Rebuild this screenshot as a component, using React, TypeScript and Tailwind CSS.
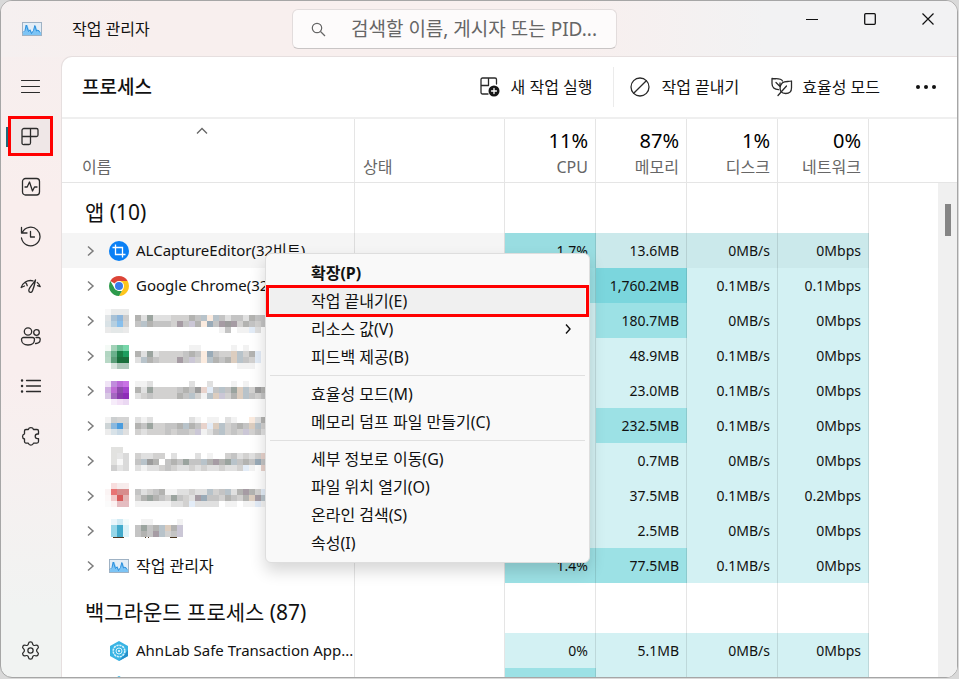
import { Settings } from "lucide-react";
import type { ReactNode } from "react";

type Heat = "low" | "mid" | "high";

const heatClass: Record<Heat, string> = {
  low: "bg-[#d3f1f3]",
  mid: "bg-[#9ce1e5]",
  high: "bg-[#7bd6dd]",
};

const hoverHeatClass: Record<Heat, string> = {
  low: "bg-[#cbe9eb]",
  mid: "bg-[#99dde1]",
  high: "bg-[#76ced5]",
};

/* ---------- pixelated names ---------- */

const shades: Record<string, string> = {
  a: "#f2f2f2",
  b: "#e0e0e0",
  c: "#d2d1d0",
  d: "#c4c4c4",
  e: "#b3b3b1",
  f: "#9c9c9c",
  h: "#fbebdf",
  i: "#9aabb8",
  j: "#e3ecf7",
  k: "#b8c3ca",
  l: "#a69ca4",
  m: "#dccdbf",
  n: "#9ba49f",
  p: "#cbc7d6",
  r: "#e8d3cc",
};

type Mosaic = { top: number; icon: string[][]; text: string[] };

const mosaics: Record<string, Mosaic> = {
  edge: {
    top: 5,
    icon: [
      ["#f8f8f8", "#e9eaea", "#e9eaea", "#e9eaea"],
      ["#e0e4e6", "#a9c2d6", "#8db6dc", "#cccccc"],
      ["#d9e2e6", "#b5cfe0", "#88bfec", "#d2d2d2"],
      ["#eaeaea", "#e4e8e8", "#e4e8e8", "#eaeaea"],
    ],
    text: ["", "ebnbbbcccedkhkdbddbedd", "dkedddcldpehidlflcedcd", "..............ad.aajb."],
  },
  excel: {
    top: 6,
    icon: [
      ["#f4faf6", "#a3d2b8", "#6cc096", "#78d6aa"],
      ["#b2d6c2", "#6ab08c", "#1a7e46", "#1e9e60"],
      ["#b8d8c6", "#5c9e7a", "#1a6e3c", "#1a6e3c"],
      ["", "#d8e4de", "#b0c8bc", "#b0c8bc"],
    ],
    text: [".........aa.....a.a...", "ebnbccccdedhidccmkcej.", "bkedcccldpchkedemkdcj.", ".................aaa.."],
  },
  onenote: {
    top: 7,
    icon: [
      ["#f0e4f6", "#c08cdc", "#ba68d8", "#c872e4"],
      ["#d0b0e2", "#be6cd4", "#8e4cac", "#a442cc"],
      ["#d8c8e4", "#a468c0", "#8a3cac", "#8e2cb8"],
      ["", "#f6ecfa", "#f2e0f6", "#ead8f2"],
    ],
    text: ["aab......b..b...a.a...", "ebnccccdedfrjdkdnmkcfe", "bcdccccedkcakmpcemkdcd"],
  },
  word: {
    top: 8,
    icon: [
      ["#f2f2f2", "#cccfd0", "#d4d4d4", "#d4d4d4"],
      ["#cdd4d6", "#8ab8de", "#4a9cde", "#cccccc"],
      ["#ececec", "#d8e2e8", "#c8d8e4", "#e0e0e0"],
    ],
    text: ["bab......ba.aa.ba..hbe", "ednccddekedrjmkcdedmkc", "cbcccdcddcpabdkcdcpcdb"],
  },
  hwp: {
    top: 3,
    icon: [
      ["", "#e2e2e0", "#e2e2e0", ""],
      ["", "#e2e2e0", "#e6e6e6", "#dadada"],
      ["", "#e2e2e0", "#f8f8f8", "#dadada"],
      ["", "#cfcfcf", "#e4e4e4", "#dadada"],
    ],
    text: ["", "cbbcc.b...b.a..cdbcbcr", "dkfe.dednddkelenkdedid", "babbcdcbbcbcbbcbbcja.r"],
  },
  pdf: {
    top: 4,
    icon: [
      ["", "#f8dede", "#f6ecec", "#f8ecec"],
      ["#fbf4f4", "#e87474", "#d68c8c", "#d88c8c"],
      ["#fcf8f8", "#f2caca", "#d85a5a", "#e4b4b4"],
      ["#fbfbfb", "#fbf2f2", "#e4bcc0", "#e4bcc0"],
    ],
    text: ["", "dbcdeaabbcbbkcdkbelecj", "cenedcndcbliddcedcemlk", "aaaaaabbcjbbbb.aa.aaja"],
  },
  memo: {
    top: 5,
    icon: [
      ["", "#eaf6fb", "#cfeaf4", "#f4fbfb"],
      ["", "#96d6e8", "#42aacb", "#dcf2f8"],
      ["", "#96d6e8", "#42aacb", "#dcf2f8"],
    ],
    text: [".aa....a", "dndekmep", "dedlkcdp"],
  },
};

function PixelName({ mosaic }: { mosaic: Mosaic }) {
  return (
    <svg width="165" height="34" className="ml-[9px] shrink-0" shapeRendering="crispEdges" aria-hidden="true">
      {mosaic.icon.map((line, y) =>
        line.map((fill, x) =>
          fill ? <rect key={`i${x}-${y}`} x={x * 6} y={mosaic.top + y * 6} width="6" height="6" fill={fill} /> : null,
        ),
      )}
      {mosaic.text.map((line, y) =>
        line.split("").map((ch, x) =>
          shades[ch] ? (
            <rect key={`t${x}-${y}`} x={30 + x * 6} y={mosaic.top + y * 6} width="6" height="6" fill={shades[ch]} />
          ) : null,
        ),
      )}
      {/* bits of the last row that stick out under the blocks */}
      {mosaic === mosaics.memo && (
        <path d="M8 23.500h11M40 23.500h1M43 23.500h1M65 23.500h7" stroke="#4a3520" fill="none" />
      )}
    </svg>
  );
}

/* ---------- app icons ---------- */

function TaskManagerIcon() {
  return (
    <svg width="20" height="14" viewBox="0 0 20 14" className="shrink-0" aria-hidden="true">
      <rect x=".5" y=".5" width="19" height="13" fill="#e3edf6" stroke="#9fb2c4" />
      <path d="M1 11l2-2 1-6 1.500 0 1.500 5 1.500-1 1.500 4 1.500-2 1-5 1.500 0 1 5 2-1 2 3v2H1z" fill="#7cc4f5" />
      <path d="M1 10.500l2-2 1.200-5.500 2.300 6.500 1.500-1.500 1.500 3.500 2-3 1.300-5 1.700 5.500 1.500-1 2 2.500" fill="none" stroke="#2b8fdc" />
    </svg>
  );
}

function CaptureIcon() {
  return (
    <svg width="20" height="20" viewBox="0 0 20 20" className="shrink-0" aria-hidden="true">
      <circle cx="10" cy="10" r="10" fill="#0a80f5" />
      <path d="M6.500 3.500v10h10M3.500 6.500h10v10" fill="none" stroke="#fff" strokeWidth="1.300" />
    </svg>
  );
}

function ChromeIcon() {
  return (
    <svg width="20" height="20" viewBox="0 0 20 20" className="shrink-0" aria-hidden="true">
      <path d="M10 10L1.340 5A10 10 0 0 1 18.660 5z" fill="#dc4437" />
      <path d="M10 5h8.660A10 10 0 0 1 10 20l4.330-7.500z" fill="#fdc51d" />
      <path d="M1.340 5l4.330 7.500L10 15h2.900L10 20A10 10 0 0 1 1.340 5z" fill="#2d9a4b" />
      <circle cx="10" cy="10" r="5" fill="#fff" />
      <circle cx="10" cy="10" r="4" fill="#3a7bea" />
    </svg>
  );
}

function AhnLabIcon() {
  return (
    <svg width="20" height="20" viewBox="0 0 20 20" className="shrink-0" aria-hidden="true">
      <path d="M10 0l9 5v10l-9 5-9-5V5z" fill="#39b4e4" />
      <path d="M10 20l9-5V9l-9 11z" fill="#228fca" />
      <circle cx="10" cy="10" r="5.800" fill="none" stroke="#d6f1fb" strokeWidth="1.600" strokeDasharray="2.200 .8" />
      <circle cx="10" cy="10" r="3" fill="none" stroke="#d6f1fb" strokeWidth="1" />
      <circle cx="10" cy="10" r="1" fill="#fff" />
    </svg>
  );
}

/* ---------- line icons ---------- */

function LineIcon({ size = 20, children }: { size?: number; children: ReactNode }) {
  return (
    <svg
      width={size}
      height={size}
      viewBox={`0 0 ${size} ${size}`}
      fill="none"
      stroke="#2b2b2b"
      strokeWidth="1.300"
      strokeLinecap="round"
      strokeLinejoin="round"
      aria-hidden="true"
    >
      {children}
    </svg>
  );
}

const navItems = [
  {
    label: "탐색 열기",
    icon: <path d="M1.500 4.500h18M1.500 10.500h18M1.500 16.500h18" strokeWidth="1.200" />,
  },
  {
    label: "프로세스",
    icon: (
      <path d="M4 2.500h12.500a1.500 1.500 0 0 1 1.500 1.500v5a1.500 1.500 0 0 1-1.500 1.500H2M10.500 2.500v14.500a1.500 1.500 0 0 1-1.500 1.500H4A1.500 1.500 0 0 1 2 17V4.500A2 2 0 0 1 4 2.500z" />
    ),
    selected: true,
  },
  {
    label: "성능",
    icon: (
      <>
        <rect x="2.500" y="2.500" width="17" height="16.500" rx="3" />
        <path d="M5 11h2.200l2.300-5 3 9 2-4H17" />
      </>
    ),
  },
  {
    label: "앱 기록",
    icon: (
      <>
        <path d="M1.500 1.500v5.500H7M2.300 6.500A9.300 9.300 0 1 1 1.500 12" />
        <path d="M10.500 5.500v5.500h4" />
      </>
    ),
  },
  {
    label: "시작 앱",
    icon: (
      <>
        <path d="M1.200 11.500C2.500 7 7 3.500 13 4.800M5.500 6.500c1 .8 1.500 2 1.700 3.200M1.200 11.500l3.300-1.500M17.300 6.500c1.400 1 2.300 2.400 2.900 4.200l-2.700-1" />
        <path d="M15.500 4c-2 3.800-6.700 7.500-6.700 10.600 0 2.200 2.700 2.600 3.600.4C13.600 12.200 14.700 8 15.500 4z" />
      </>
    ),
  },
  {
    label: "사용자",
    icon: (
      <>
        <circle cx="8" cy="5.500" r="3.700" />
        <circle cx="16.500" cy="6.500" r="2.800" />
        <path d="M3.500 11.500h9a2 2 0 0 1 2 2c0 3.500-2.700 5.500-6.500 5.500s-6.500-2-6.500-5.500a2 2 0 0 1 2-2zM16 11.500h2.200a2 2 0 0 1 2 2c0 2.700-2 4.200-4.700 4" />
      </>
    ),
  },
  {
    label: "세부 정보",
    icon: (
      <>
        <path d="M6.500 4.500h14M6.500 10h14M6.500 15.500h14" />
        <path d="M2 4.500h.1M2 10h.1M2 15.500h.1" strokeWidth="2.400" />
      </>
    ),
  },
  {
    label: "서비스",
    icon: (
      <path d="M6 3.500h2.300a2.700 2.700 0 0 1 5.200 0H17a1.500 1.500 0 0 1 1.500 1.500v3h-1a2.300 2.300 0 0 0 0 4.600h1v3a1.500 1.500 0 0 1-1.500 1.500h-3.500a2.700 2.700 0 0 1-5.200 0H6a1.500 1.500 0 0 1-1.500-1.500V13a2.700 2.700 0 0 1 0-5.200V5A1.500 1.500 0 0 1 6 3.500z" />
    ),
  },
];

function RunTaskIcon() {
  return (
    <LineIcon size={20}>
      <path d="M8 17H2.500A1.500 1.500 0 0 1 1 15.500v-13A1.500 1.500 0 0 1 2.500 1H15a1.500 1.500 0 0 1 1.500 1.500V7M8.500 1v7.500M1 8.500h7.500" />
      <circle cx="14" cy="14" r="5.500" fill="#151515" stroke="none" />
      <path d="M14 11.500v5M11.500 14h5" stroke="#fff" />
    </LineIcon>
  );
}

function EndTaskIcon() {
  return (
    <LineIcon size={20}>
      <circle cx="10" cy="10" r="9" />
      <path d="M3.700 16.300L16.300 3.700" />
    </LineIcon>
  );
}

function EfficiencyIcon() {
  return (
    <LineIcon size={22}>
      <path d="M1 2.500c3.500.8 8.500-1 10.500 2.500M1 2.500v5c0 4 2.500 6.200 6.500 6.200M5 6.500l4 4M9 10.500V7" />
      <path d="M20.500 5v7c0 3.500-2.300 5.500-5.800 5.500-2.200 0-3.800-.8-5-2.200-1.200-3.300-.5-6.500 1.800-8.600C14 4.800 17.500 6 20.500 5zM15.500 10L7 19.500" />
    </LineIcon>
  );
}

function Chevron() {
  return (
    <svg width="10" height="12" viewBox="0 0 10 12" fill="none" stroke="#7c7c7c" strokeWidth="1.500" aria-hidden="true">
      <path d="M2 1.500L7 6 2 10.500" />
    </svg>
  );
}

/* ---------- process table ---------- */

type Row = {
  name: string;
  korean?: boolean;
  icon?: ReactNode;
  mosaic?: Mosaic;
  hovered?: boolean;
  single?: boolean;
  values: [string, string, string, string];
  heat: [Heat, Heat, Heat, Heat];
};

const apps: Row[] = [
  {
    name: "ALCaptureEditor(32비트)",
    icon: <CaptureIcon />,
    hovered: true,
    values: ["1.7%", "13.6MB", "0MB/s", "0Mbps"],
    heat: ["mid", "low", "low", "low"],
  },
  {
    name: "Google Chrome(32비트)",
    icon: <ChromeIcon />,
    values: ["1.2%", "1,760.2MB", "0.1MB/s", "0.1Mbps"],
    heat: ["mid", "high", "low", "low"],
  },
  { name: "", mosaic: mosaics.edge, values: ["0%", "180.7MB", "0MB/s", "0Mbps"], heat: ["low", "mid", "low", "low"] },
  { name: "", mosaic: mosaics.excel, values: ["0%", "48.9MB", "0.1MB/s", "0Mbps"], heat: ["low", "low", "low", "low"] },
  { name: "", mosaic: mosaics.onenote, values: ["0%", "23.0MB", "0.1MB/s", "0Mbps"], heat: ["low", "low", "low", "low"] },
  { name: "", mosaic: mosaics.word, values: ["0%", "232.5MB", "0.1MB/s", "0Mbps"], heat: ["low", "mid", "low", "low"] },
  { name: "", mosaic: mosaics.hwp, values: ["0%", "0.7MB", "0MB/s", "0Mbps"], heat: ["low", "low", "low", "low"] },
  { name: "", mosaic: mosaics.pdf, values: ["0%", "37.5MB", "0.1MB/s", "0.2Mbps"], heat: ["low", "low", "low", "low"] },
  { name: "", mosaic: mosaics.memo, values: ["0%", "2.5MB", "0MB/s", "0Mbps"], heat: ["low", "low", "low", "low"] },
  {
    name: "작업 관리자",
    korean: true,
    icon: <TaskManagerIcon />,
    values: ["1.4%", "77.5MB", "0.1MB/s", "0Mbps"],
    heat: ["mid", "mid", "low", "low"],
  },
];

const background: Row[] = [
  {
    name: "AhnLab Safe Transaction App...",
    icon: <AhnLabIcon />,
    single: true,
    values: ["0%", "5.1MB", "0MB/s", "0Mbps"],
    heat: ["low", "low", "low", "low"],
  },
  { name: "", icon: <AhnLabIcon />, single: true, values: ["", "", "", ""], heat: ["mid", "low", "low", "low"] },
];

const metrics = [
  { label: "CPU", pct: "11%" },
  { label: "메모리", pct: "87%" },
  { label: "디스크", pct: "1%" },
  { label: "네트워크", pct: "0%" },
];

function GroupRow({ title }: { title: string }) {
  return (
    <tr className="h-[50px]">
      <th scope="rowgroup" className="border-r border-black/10 pt-2 pl-[23px] text-left text-[21px] leading-7 font-normal whitespace-nowrap">
        {title}
      </th>
      {[0, 1, 2, 3, 4].map((i) => (
        <td key={i} className="border-r border-black/10" />
      ))}
      <td />
    </tr>
  );
}

function ProcessRow({ row }: { row: Row }) {
  const plain = row.hovered ? "bg-[#f5f5f5]" : "";
  return (
    <tr className="h-[35px]">
      <td className={`border-r border-black/10 p-0 ${plain}`}>
        <div className="flex h-[34px] items-center overflow-hidden pl-6">
          {row.single ? (
            <span className="w-[10px] shrink-0" />
          ) : (
            <button type="button" aria-label="펼치기" className="w-[10px] shrink-0">
              <Chevron />
            </button>
          )}
          {row.mosaic ? (
            <PixelName mosaic={row.mosaic} />
          ) : (
            <div className="ml-[13px] flex items-center gap-[7px]">
              {row.icon}
              <span className={row.korean ? "text-base whitespace-nowrap" : "text-[15px] whitespace-nowrap"}>{row.name}</span>
            </div>
          )}
        </div>
      </td>
      <td className={`border-r border-black/10 ${plain}`} />
      {row.values.map((v, i) => (
        <td
          key={i}
          className={`border-r border-black/10 p-0 pr-[7px] text-right text-sm ${
            row.hovered ? hoverHeatClass[row.heat[i]] : heatClass[row.heat[i]]
          }`}
        >
          {v}
        </td>
      ))}
      <td />
    </tr>
  );
}

function ProcessTable() {
  return (
    <table className="w-full table-fixed border-separate border-spacing-0">
      <colgroup>
        <col className="w-[293px]" />
        <col className="w-[150px]" />
        <col className="w-[91px]" />
        <col className="w-[91px]" />
        <col className="w-[91px]" />
        <col className="w-[91px]" />
        <col />
      </colgroup>
      <thead>
        <tr className="h-16 text-[#666]">
          <th scope="col" className="border-r border-b border-black/10 p-0 pl-5 text-left align-top font-normal">
            <div className="flex h-6 items-center justify-center pr-8">
              <svg width="12" height="8" viewBox="0 0 12 8" fill="none" stroke="#666" strokeWidth="1.300" aria-hidden="true">
                <path d="M1 6.500L6 1.500l5 5" />
              </svg>
            </div>
            <div className="pt-3 text-base leading-6">이름</div>
          </th>
          <th scope="col" className="border-r border-b border-black/10 p-0 pt-9 pl-2 text-left align-top text-base leading-6 font-normal">
            상태
          </th>
          {metrics.map((m) => (
            <th key={m.label} scope="col" className="border-r border-b border-black/10 p-0 pt-2 pr-[7px] text-right align-top font-normal">
              <div className="text-xl leading-7 text-black">{m.pct}</div>
              <div className="text-base leading-6">{m.label}</div>
            </th>
          ))}
          <td className="border-b border-black/10" />
        </tr>
      </thead>
      <tbody>
        <GroupRow title="앱 (10)" />
        {apps.map((row, i) => (
          <ProcessRow key={i} row={row} />
        ))}
        <GroupRow title="백그라운드 프로세스 (87)" />
        {background.map((row, i) => (
          <ProcessRow key={i} row={row} />
        ))}
      </tbody>
    </table>
  );
}

function ScrollBar() {
  return (
    <div className="flex w-[19px] shrink-0 flex-col">
      <div className="h-16 border-b border-black/10" />
      <div className="flex-1 bg-[#f0f0f0] pt-[21px] pl-[7px]">
        <div className="h-8 w-[6px] bg-[#858585]" />
      </div>
    </div>
  );
}

/* ---------- context menu ---------- */

const menuGroups = [
  [
    { label: "확장(P)", strong: true },
    { label: "작업 끝내기(E)", marked: true },
    { label: "리소스 값(V)", submenu: true },
    { label: "피드백 제공(B)" },
  ],
  [{ label: "효율성 모드(M)" }, { label: "메모리 덤프 파일 만들기(C)" }],
  [{ label: "세부 정보로 이동(G)" }, { label: "파일 위치 열기(O)" }, { label: "온라인 검색(S)" }, { label: "속성(I)" }],
] as { label: string; strong?: boolean; marked?: boolean; submenu?: boolean }[][];

function ContextMenu() {
  return (
    <div
      role="menu"
      className="absolute top-[196px] left-[203px] w-[325px] rounded-md border border-[#dedede] bg-[#f9f9f9] px-1 py-[5px] shadow-[0_8px_16px_rgba(0,0,0,0.16)]"
    >
      {menuGroups.map((group, g) => (
        <div key={g} className={g > 0 ? "mt-1 border-t border-[#e0e0e0] pt-1" : ""}>
          {group.map((item) => (
            <button
              key={item.label}
              type="button"
              role="menuitem"
              className={`relative flex h-7 w-full items-center justify-between pr-3 pl-[41px] text-left text-base ${
                item.strong ? "font-bold" : ""
              } ${item.marked ? "bg-[#f0f0f0]" : ""}`}
            >
              {item.label}
              {item.submenu && (
                <svg width="10" height="12" viewBox="0 0 10 12" fill="none" stroke="#111" strokeWidth="1.400" aria-hidden="true">
                  <path d="M3 1.500L7 6l-4 4.500" />
                </svg>
              )}
              {item.marked && <span className="absolute -inset-x-1 -inset-y-0.5 border-[3px] border-[#ff0000]" />}
            </button>
          ))}
        </div>
      ))}
    </div>
  );
}

/* ---------- window ---------- */

function TitleBar() {
  return (
    <header className="flex h-14 shrink-0 items-start pl-[21px]">
      <div className="flex h-14 w-[270px] items-center gap-[30px]">
        <TaskManagerIcon />
        <span className="text-base">작업 관리자</span>
      </div>
      <label className="mt-2 flex h-10 w-[325px] items-center rounded-md border border-[#e2dcdc] border-b-[#c9c5c5] bg-[#fdfbfb] pl-[18px]">
        <svg width="15" height="15" viewBox="0 0 15 15" fill="none" stroke="#666" strokeWidth="1.200" aria-hidden="true">
          <circle cx="6" cy="6" r="4.700" />
          <path d="M9.500 9.500l4.500 4.500" />
        </svg>
        <input
          type="text"
          aria-label="검색"
          placeholder="검색할 이름, 게시자 또는 PID..."
          className="ml-[25px] min-w-0 flex-1 bg-transparent text-[19px] outline-none placeholder:text-[#666]"
        />
      </label>
      <div className="ml-auto flex">
        <button type="button" aria-label="최소화" className="flex h-9 w-[58px] items-center justify-center">
          <svg width="12" height="12" stroke="#111" shapeRendering="crispEdges">
            <path d="M0 6.500h12" />
          </svg>
        </button>
        <button type="button" aria-label="최대화" className="flex h-9 w-[58px] items-center justify-center">
          <svg width="12" height="12" fill="none" stroke="#111" strokeWidth="1.300">
            <rect x=".7" y=".7" width="10.600" height="10.600" rx="1" />
          </svg>
        </button>
        <button type="button" aria-label="닫기" className="flex h-9 w-[58px] items-center justify-center">
          <svg width="12" height="12" stroke="#111" strokeWidth="1.200">
            <path d="M.5.5l11 11M11.500.5l-11 11" />
          </svg>
        </button>
      </div>
    </header>
  );
}

function SideNav() {
  return (
    <nav className="flex w-[61px] shrink-0 flex-col pt-1 pb-[7px] pl-[7px]">
      {navItems.map((item) => (
        <div key={item.label} className="flex h-[50px] items-center">
          <button
            type="button"
            aria-label={item.label}
            className={`relative flex h-10 w-[45px] items-center justify-center ${
              item.selected ? "border-[3px] border-[#ff0000] bg-[#efe7e7]" : ""
            }`}
          >
            {item.selected && <span className="absolute top-2 -left-[5px] h-5 w-0.5 bg-[#1d6b7c]" />}
            <LineIcon size={21}>{item.icon}</LineIcon>
          </button>
        </div>
      ))}
      <button type="button" aria-label="설정" className="mt-auto flex h-10 w-[45px] items-center justify-center">
        <Settings size={21} strokeWidth={1.4} color="#2b2b2b" />
      </button>
    </nav>
  );
}

function Toolbar() {
  return (
    <div className="flex h-[62px] shrink-0 items-center border-b-2 border-[#efefef] px-5">
      <h1 className="text-[19px] font-medium">프로세스</h1>
      <div className="ml-auto flex items-center">
        <button type="button" className="flex items-center gap-[11px] text-base">
          <RunTaskIcon />새 작업 실행
        </button>
        <span className="mr-4 ml-[21px] h-10 w-px bg-[#ebebeb]" />
        <button type="button" className="flex items-center gap-[11px] text-base">
          <EndTaskIcon />
          작업 끝내기
        </button>
        <button type="button" className="ml-8 flex items-center gap-[9px] text-base">
          <EfficiencyIcon />
          효율성 모드
        </button>
        <button type="button" aria-label="더 보기" className="ml-[35px]">
          <svg width="22" height="6" fill="#111">
            <circle cx="3" cy="3" r="2" />
            <circle cx="11" cy="3" r="2" />
            <circle cx="19" cy="3" r="2" />
          </svg>
        </button>
      </div>
    </div>
  );
}

export default function App() {
  return (
    <div className="h-screen bg-[#d9d9d9] pr-px pb-px font-['Noto_Sans','Noto_Sans_CJK_KR',sans-serif] text-[#111]">
      <div className="flex h-full flex-col overflow-hidden rounded-xl border border-[#a6a6a6] bg-[linear-gradient(180deg,#f6efef_0%,#f9eeed_30%,#f9eeee_55%,#f1f3f2_90%)]">
        <div className="bg-[linear-gradient(90deg,#f5f0f0_0%,#f8efee_15%,#f8efee_60%,#f2f2f3_80%)]">
          <TitleBar />
        </div>
        <div className="flex min-h-0 flex-1">
          <SideNav />
          <main className="relative flex min-w-0 flex-1 flex-col rounded-tl-[10px] bg-white shadow-[0_0_0_1px_#e6dfdf]">
            <Toolbar />
            <div className="flex min-h-0 flex-1 overflow-hidden">
              <div className="min-w-0 flex-1">
                <ProcessTable />
              </div>
              <ScrollBar />
            </div>
            <ContextMenu />
          </main>
        </div>
      </div>
    </div>
  );
}
